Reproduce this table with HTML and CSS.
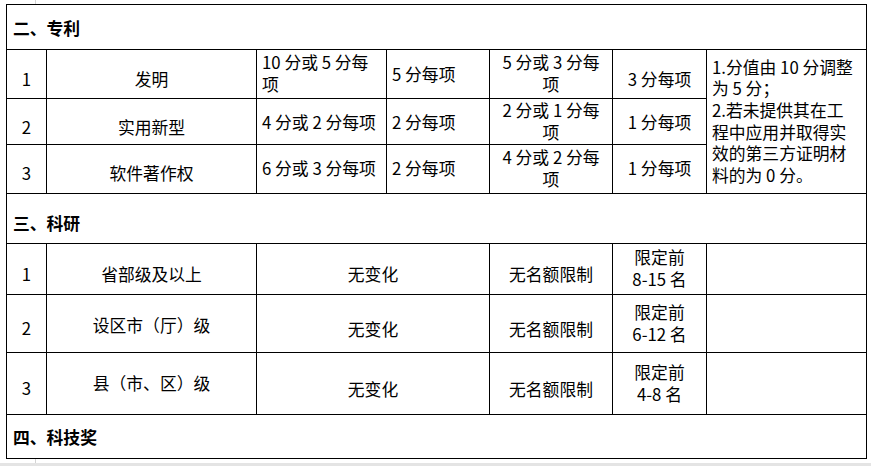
FILE: index.html
```html
<!DOCTYPE html>
<html lang="zh-CN">
<head>
<meta charset="utf-8">
<title>评分表</title>
<link rel="stylesheet" href="styles.css">
</head>
<body>
<div class="mark"></div>
<div class="sheet">
  <div class="sec">二、专利</div>

  <div class="cell c s6">1</div>
  <div class="cell c s6">发明</div>
  <div class="cell l">10 分或 5 分每<br>项</div>
  <div class="cell l s1">5 分每项</div>
  <div class="cell c">5 分或 3 分每<br>项</div>
  <div class="cell c s6">3 分每项</div>
  <div class="cell l notes">1.分值由 10 分调整<br>为 5 分；<br>2.若未提供其在工<br>程中应用并取得实<br>效的第三方证明材<br>料的为 0 分。</div>

  <div class="cell c s6">2</div>
  <div class="cell c s6">实用新型</div>
  <div class="cell l s1">4 分或 2 分每项</div>
  <div class="cell l s1">2 分每项</div>
  <div class="cell c">2 分或 1 分每<br>项</div>
  <div class="cell c s1">1 分每项</div>

  <div class="cell c s4">3</div>
  <div class="cell c s4">软件著作权</div>
  <div class="cell l">6 分或 3 分每项</div>
  <div class="cell l">2 分每项</div>
  <div class="cell c">4 分或 2 分每<br>项</div>
  <div class="cell c">1 分每项</div>

  <div class="sec sec-low">三、科研</div>

  <div class="cell c s5">1</div>
  <div class="cell c s5">省部级及以上</div>
  <div class="cell c s5 wide">无变化</div>
  <div class="cell c s5">无名额限制</div>
  <div class="cell c">限定前<br>8-15 名</div>
  <div class="cell"></div>

  <div class="cell c s5">2</div>
  <div class="cell c s2">设区市（厅）级</div>
  <div class="cell c s6 wide">无变化</div>
  <div class="cell c s6">无名额限制</div>
  <div class="cell c">限定前<br>6-12 名</div>
  <div class="cell"></div>

  <div class="cell c s5">3</div>
  <div class="cell c">县（市、区）级</div>
  <div class="cell c s6 wide">无变化</div>
  <div class="cell c s6">无名额限制</div>
  <div class="cell c">限定前<br>4-8 名</div>
  <div class="cell"></div>

  <div class="sec">四、科技奖</div>
</div>
<div class="mark mark-bottom"></div>
<div class="band"></div>
</body>
</html>
```

FILE: styles.css
```css
html, body {
  margin: 0;
  padding: 0;
  background: #fff;
}

body {
  width: 871px;
  height: 466px;
  overflow: hidden;
  font-family: "Noto Sans CJK SC", "Noto Sans", sans-serif;
  font-size: 16.8px;
  line-height: 21.6px;
  color: #000;
}

.mark {
  width: 0;
  height: 4px;
  margin-left: 35px;
  border-left: 1px solid #d4d4d4;
}

.mark-bottom {
  height: 4px;
}

.band {
  height: 3px;
  background: #e4e4e4;
}

.sheet {
  margin-left: 6px;
  width: 859px;
  padding: 1px;
  background: #000;
  display: grid;
  gap: 1px;
  grid-template-columns: 39px 209px 129px 102px 122px 93px 159px;
  grid-template-rows: 44px 48px 45px 48px 49px 50px 57px 61px 43px;
}

.sec {
  grid-column: 1 / -1;
  background: #fff;
  font-weight: bold;
  display: flex;
  align-items: center;
  padding-left: 6px;
  padding-top: 3px;
}

.sec-low {
  padding-top: 10px;
}

.cell {
  background: #fff;
  display: flex;
  flex-direction: column;
  justify-content: center;
  white-space: nowrap;
  box-sizing: border-box;
}

.c {
  align-items: center;
  text-align: center;
}

.l {
  align-items: flex-start;
  padding-left: 5px;
}

.notes {
  grid-row: span 3;
}

.wide {
  grid-column: span 2;
}

.s1 { padding-top: 2px; }
.s2 { padding-top: 4px; }
.s4 { padding-top: 9px; }
.s5 { padding-top: 11px; }
.s6 { padding-top: 12px; }
```
